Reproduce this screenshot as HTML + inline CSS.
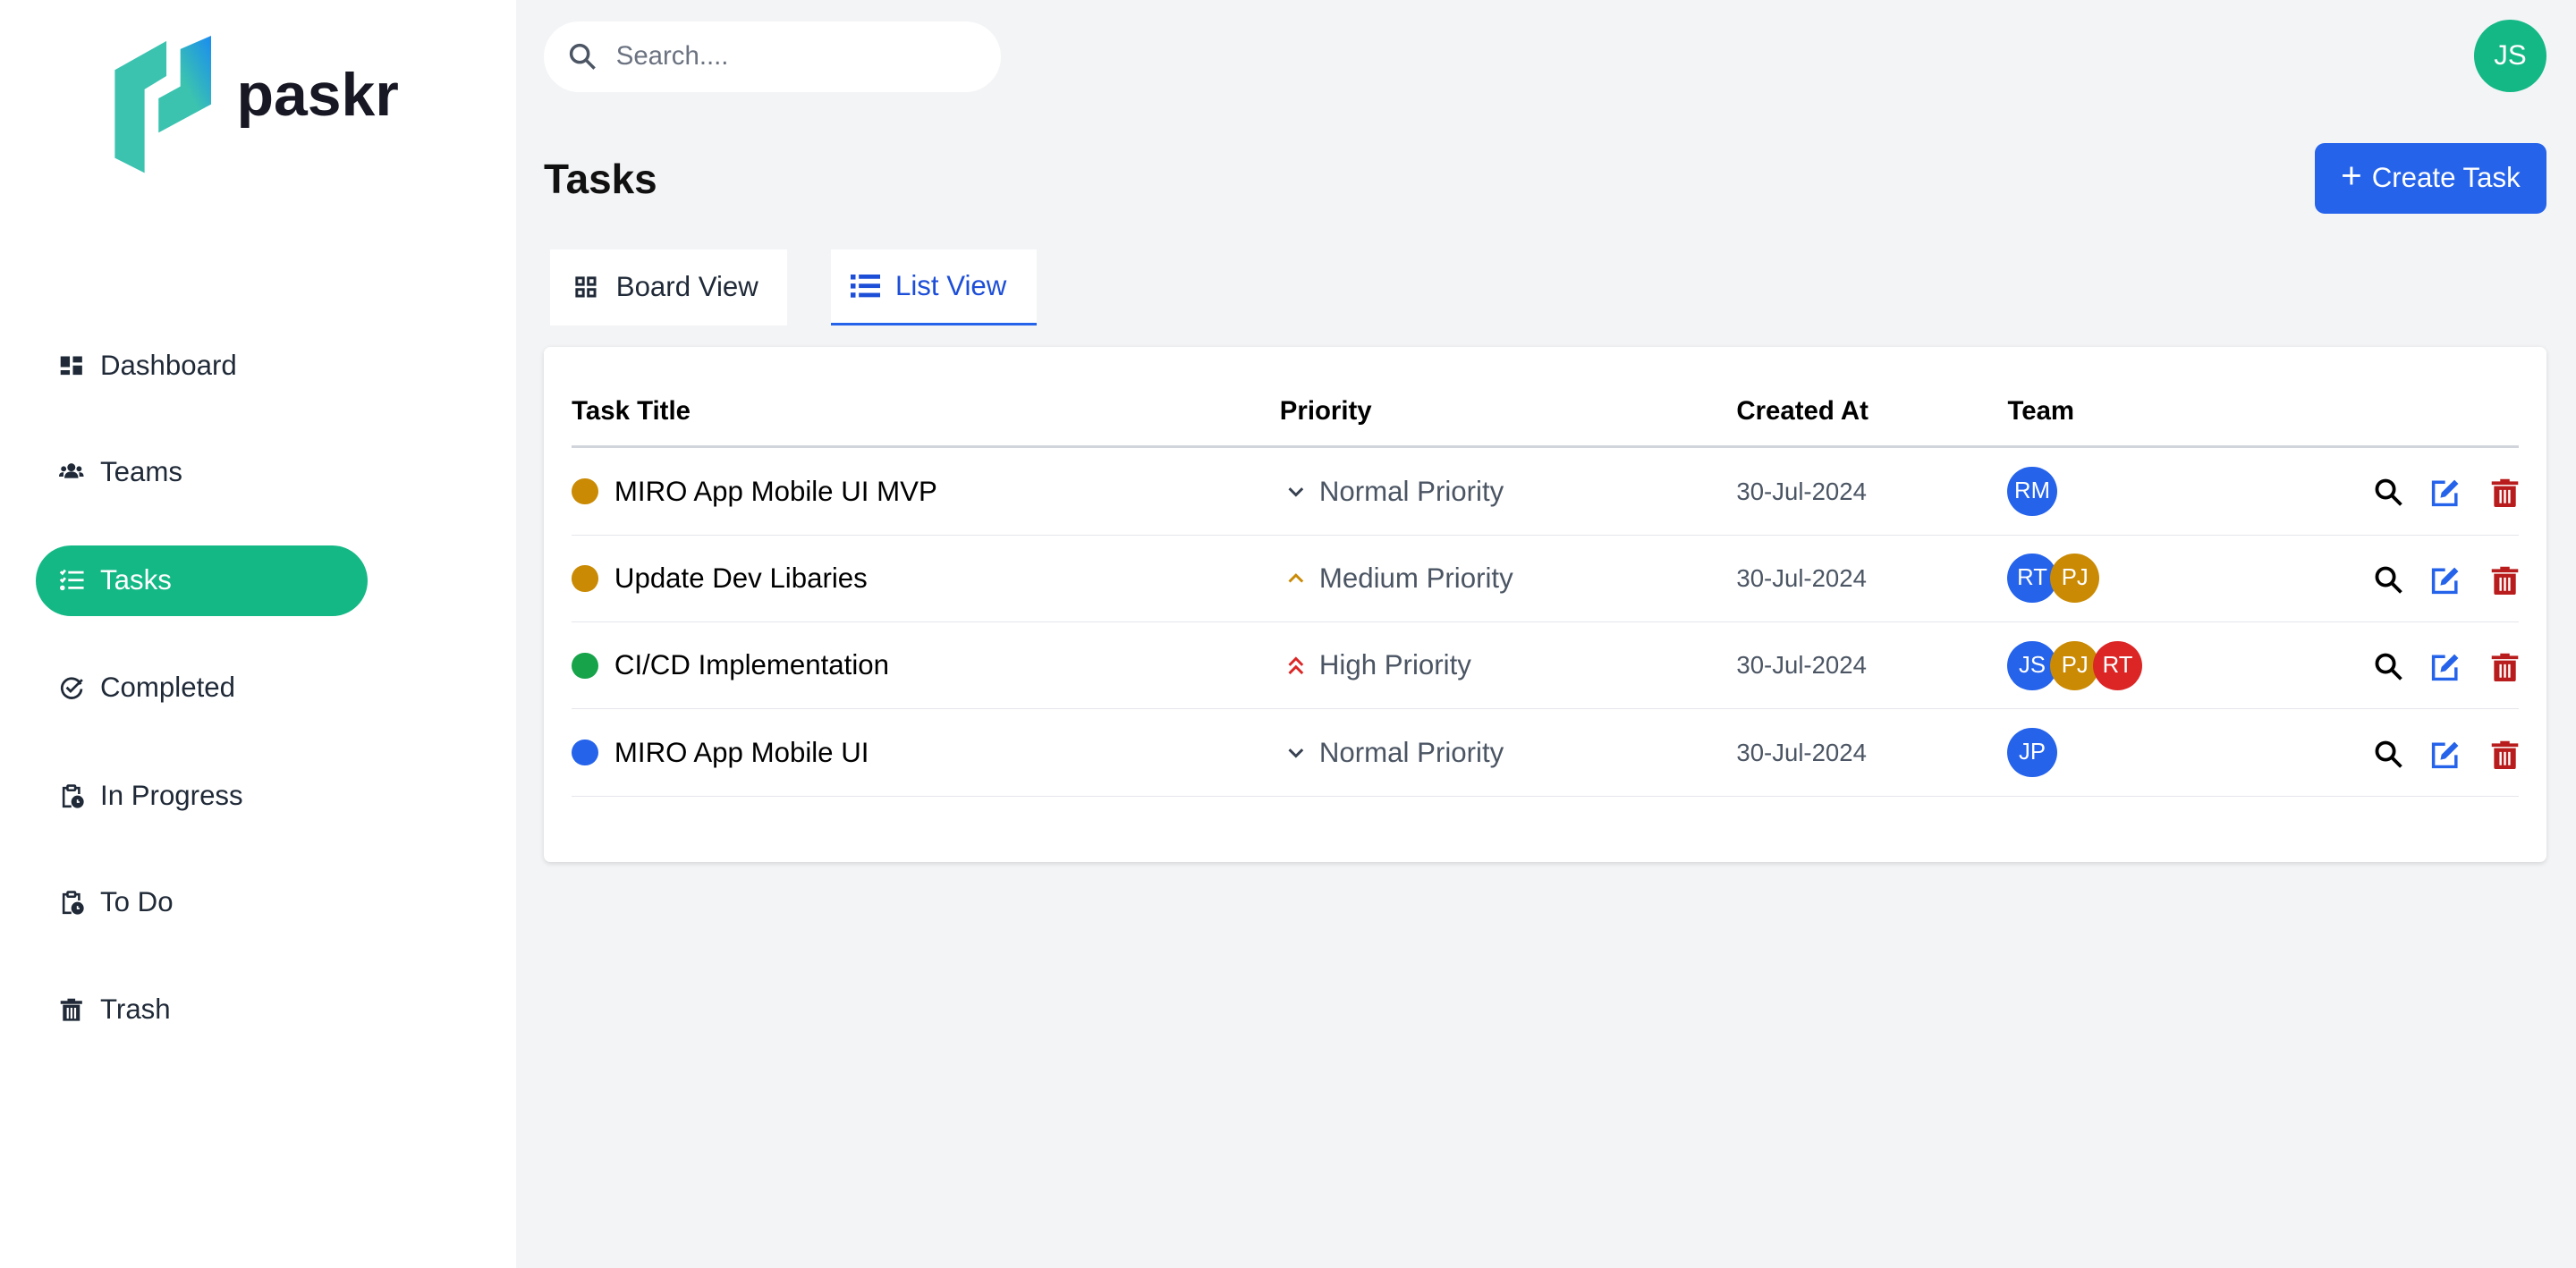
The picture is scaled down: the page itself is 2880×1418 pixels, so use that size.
<!DOCTYPE html>
<html><head><meta charset="utf-8"><style>
*{box-sizing:border-box;margin:0;padding:0}
html,body{width:2880px;height:1418px;overflow:hidden}
body{background:#f3f4f6;font-family:"Liberation Sans",sans-serif}
#w{zoom:1.836735;width:1568px;height:772px;position:relative}
.a{position:absolute}
.side{left:0;top:0;width:314px;height:772px;background:#fff}
.nav{position:absolute;left:22px;width:202px;height:43px;border-radius:22px;display:flex;align-items:center;padding-left:14px;font-size:17px;color:#1f2937}
.nav svg{width:15px;height:15px;margin-right:10px}
.nav.on{background:#14b885;color:#fff}
.row{position:absolute;left:348px;width:1185px;height:53px;border-bottom:1px solid #e5e7eb;display:flex;align-items:center}
.c1{position:absolute;left:0;display:flex;align-items:center;font-size:17px;color:#000}
.dot{width:16px;height:16px;border-radius:50%;margin-right:10px}
.c2{position:absolute;left:434px;display:flex;align-items:center;font-size:17px;color:#4b5563}
.c2 svg{width:14px;height:14px;margin-right:7px}
.c3{position:absolute;left:709px;font-size:15px;color:#4b5563}
.c4{position:absolute;left:874px;display:flex}
.av{width:30px;height:30px;border-radius:50%;color:#fff;font-size:14px;display:flex;align-items:center;justify-content:center;margin-right:-4px}
.ic{position:absolute;top:18px;width:18px;height:18px}
.b{background:#2563eb}.y{background:#ca8a04}.r{background:#dc2626}.g{background:#16a34a}
</style></head><body><div id="w">
<div class="a side">
 <svg class="a" style="left:0;top:0" width="140" height="110" viewBox="0 0 140 110"><defs><linearGradient id="lg" x1="0" y1="1" x2="1" y2="0"><stop offset=".5" stop-color="#3bc3b0"/><stop offset="1" stop-color="#1a8cf0"/></linearGradient></defs>
 <path d="M69.9 42.6 L101.3 25 L101.3 46.3 L88 54.4 L88 105.3 L69.9 96.2Z" fill="#3bc3b0"/>
 <path d="M109.8 29.9 L128.5 21.8 L128.5 63.5 L96.5 80.8 L96.5 59.9 L109.8 52.6Z" fill="url(#lg)"/></svg>
 <div class="a" style="left:144px;top:40px;font-size:37px;line-height:1;font-weight:bold;color:#181825">paskr</div>
 <div class="nav" style="top:201px"><svg viewBox="0 0 16 16"><path d="M1 2h6v7H1zM9 2h6v4H9zM9 8h6v6H9zM1 11h6v3H1z" fill="#1f2937"/></svg>Dashboard</div>
 <div class="nav" style="top:266px"><svg viewBox="0 0 16 16" fill="#1f2937"><circle cx="8" cy="5" r="2.6"/><circle cx="3" cy="6" r="1.7"/><circle cx="13" cy="6" r="1.7"/><path d="M3.5 12c0-3 2-4.2 4.5-4.2s4.5 1.2 4.5 4.2z"/><path d="M0 11c0-2 1-2.8 3-2.8L2.8 11zM16 11c0-2-1-2.8-3-2.8l.2 2.8z"/></svg>Teams</div>
 <div class="nav on" style="top:332px"><svg viewBox="0 0 16 16" fill="none" stroke="#fff" stroke-width="1.6"><path d="M1 2.5l1.2 1.2L4 1.5M1 7.5l1.2 1.2L4 6.5M6 3h10M6 8h10M6 13h10"/><circle cx="2.2" cy="13" r=".8" fill="#fff"/></svg>Tasks</div>
 <div class="nav" style="top:397px"><svg viewBox="0 0 16 16" fill="none" stroke="#1f2937" stroke-width="1.6"><path d="M14 6A6.3 6.3 0 1 0 14.5 9"/><path d="M5 8l2.5 2.5L15 3"/></svg>Completed</div>
 <div class="nav" style="top:463px"><svg viewBox="0 0 16 16" fill="none" stroke="#1f2937" stroke-width="1.5"><path d="M5 3H3v12h5M11 3h2v4"/><rect x="5.5" y="1.5" width="5" height="3" rx=".5"/><circle cx="12" cy="12" r="3.3" fill="#1f2937"/><path d="M12 10.5v1.7h1.3" stroke="#fff" stroke-width="1"/></svg>In Progress</div>
 <div class="nav" style="top:528px"><svg viewBox="0 0 16 16" fill="none" stroke="#1f2937" stroke-width="1.5"><path d="M5 3H3v12h5M11 3h2v4"/><rect x="5.5" y="1.5" width="5" height="3" rx=".5"/><circle cx="12" cy="12" r="3.3" fill="#1f2937"/><path d="M12 10.5v1.7h1.3" stroke="#fff" stroke-width="1"/></svg>To Do</div>
 <div class="nav" style="top:593px"><svg viewBox="0 0 16 16" fill="#1f2937"><path d="M1 2.5h14v2H1zM5.5 1h5v1.5h-5z"/><path d="M2.5 5h11v10.5h-11zM5 7v7h1.3V7zM7.4 7v7h1.3V7zM9.8 7v7h1.3V7z" fill-rule="evenodd"/></svg>Trash</div>
</div>
<div class="a" style="left:331px;top:13px;width:278px;height:43px;border-radius:22px;background:#fff;display:flex;align-items:center;padding-left:15px;font-size:16px;color:#6b7280"><svg width="17" height="17" viewBox="0 0 18 18" fill="none" stroke="#4b5563" stroke-width="2" style="margin-right:12px"><circle cx="7" cy="7" r="5.5"/><path d="M11 11l5.5 5.5"/></svg>Search....</div>
<div class="a" style="left:1506px;top:12px;width:44px;height:44px;border-radius:50%;background:#14b885;color:#fff;font-size:17px;display:flex;align-items:center;justify-content:center">JS</div>
<div class="a" style="left:331px;top:94px;font-size:25px;color:#111;font-weight:bold">Tasks</div>
<div class="a" style="left:1409px;top:87px;width:141px;height:43px;border-radius:6px;background:#2563eb;color:#fff;font-size:17px;display:flex;align-items:center;justify-content:center"><span style="font-size:22px;margin-right:6px;margin-top:-3px">+</span>Create Task</div>
<div class="a" style="left:335px;top:152px;width:144px;height:46px;background:#fff;display:flex;align-items:center;padding-left:15px;font-size:17px;color:#1f2937"><svg width="13" height="13" viewBox="0 0 13 13" fill="none" stroke="#1f2937" stroke-width="1.6" style="margin-right:12px"><rect x="1" y="1" width="4" height="4"/><rect x="8" y="1" width="4" height="4"/><rect x="1" y="8" width="4" height="4"/><rect x="8" y="8" width="4" height="4"/></svg>Board View</div>
<div class="a" style="left:506px;top:152px;width:125px;height:46px;background:#fff;border-bottom:2px solid #2563eb;display:flex;align-items:center;padding-left:12px;font-size:17px;color:#1d4ed8"><svg width="18" height="14" viewBox="0 0 18 14" fill="#1d4ed8" style="margin-right:9px"><rect x="0" y="0" width="3" height="3"/><rect x="0" y="5.5" width="3" height="3"/><rect x="0" y="11" width="3" height="3"/><rect x="5" y="0" width="13" height="2.6"/><rect x="5" y="5.6" width="13" height="2.6"/><rect x="5" y="11.2" width="13" height="2.6"/></svg>List View</div>
<div class="a" style="left:331px;top:211px;width:1219px;height:314px;background:#fff;border-radius:4px;box-shadow:0 1px 3px rgba(0,0,0,.12)"></div>
<div class="a" style="left:348px;top:226px;width:1185px;height:47px;border-bottom:2px solid #d1d5db;font-size:16px;font-weight:bold;color:#000">
 <span class="a" style="left:0;top:15px">Task Title</span><span class="a" style="left:431px;top:15px">Priority</span><span class="a" style="left:709px;top:15px">Created At</span><span class="a" style="left:874px;top:15px">Team</span></div>
<div class="row" style="top:273px">
 <div class="c1"><div class="dot y"></div>MIRO App Mobile UI MVP</div>
 <div class="c2"><svg viewBox="0 0 14 14" fill="none" stroke="#374151" stroke-width="1.6"><path d="M3 5l4 4 4-4"/></svg>Normal Priority</div>
 <div class="c3">30-Jul-2024</div>
 <div class="c4"><div class="av b">RM</div></div>
 <svg class="ic" style="left:1097px" viewBox="0 0 19 19" fill="none" stroke="#000" stroke-width="2.2"><circle cx="7.5" cy="7.5" r="5.5"/><path d="M11.5 11.5l6 6"/></svg>
 <svg class="ic" style="left:1132px" viewBox="0 0 19 19"><path d="M9 3H1.5v14.5H16V10" fill="none" stroke="#2563eb" stroke-width="2"/><path d="M6 13l.7-3.3L15 1.5l2.5 2.5-8.3 8.3z" fill="#2563eb"/></svg>
 <svg class="ic" style="left:1168px" viewBox="0 0 19 19" fill="#b91c1c"><path d="M1 2.5h17v2.2H1zM6.5 1h6v1.6h-6z"/><path d="M2.5 5.5h14v12.5a1 1 0 0 1-1 1h-12a1 1 0 0 1-1-1zM6 8v8.5h1.4V8zM8.8 8v8.5h1.4V8zM11.6 8v8.5H13V8z" fill-rule="evenodd"/></svg>
</div>
<div class="row" style="top:326px">
 <div class="c1"><div class="dot y"></div>Update Dev Libaries</div>
 <div class="c2"><svg viewBox="0 0 14 14" fill="none" stroke="#ca8a04" stroke-width="1.6"><path d="M3 9l4-4 4 4"/></svg>Medium Priority</div>
 <div class="c3">30-Jul-2024</div>
 <div class="c4"><div class="av b">RT</div><div class="av y">PJ</div></div>
 <svg class="ic" style="left:1097px" viewBox="0 0 19 19" fill="none" stroke="#000" stroke-width="2.2"><circle cx="7.5" cy="7.5" r="5.5"/><path d="M11.5 11.5l6 6"/></svg>
 <svg class="ic" style="left:1132px" viewBox="0 0 19 19"><path d="M9 3H1.5v14.5H16V10" fill="none" stroke="#2563eb" stroke-width="2"/><path d="M6 13l.7-3.3L15 1.5l2.5 2.5-8.3 8.3z" fill="#2563eb"/></svg>
 <svg class="ic" style="left:1168px" viewBox="0 0 19 19" fill="#b91c1c"><path d="M1 2.5h17v2.2H1zM6.5 1h6v1.6h-6z"/><path d="M2.5 5.5h14v12.5a1 1 0 0 1-1 1h-12a1 1 0 0 1-1-1zM6 8v8.5h1.4V8zM8.8 8v8.5h1.4V8zM11.6 8v8.5H13V8z" fill-rule="evenodd"/></svg>
</div>
<div class="row" style="top:379px">
 <div class="c1"><div class="dot g"></div>CI/CD Implementation</div>
 <div class="c2"><svg viewBox="0 0 14 14" fill="none" stroke="#dc2626" stroke-width="1.6"><path d="M3 7l4-4 4 4M3 12l4-4 4 4"/></svg>High Priority</div>
 <div class="c3">30-Jul-2024</div>
 <div class="c4"><div class="av b">JS</div><div class="av y">PJ</div><div class="av r">RT</div></div>
 <svg class="ic" style="left:1097px" viewBox="0 0 19 19" fill="none" stroke="#000" stroke-width="2.2"><circle cx="7.5" cy="7.5" r="5.5"/><path d="M11.5 11.5l6 6"/></svg>
 <svg class="ic" style="left:1132px" viewBox="0 0 19 19"><path d="M9 3H1.5v14.5H16V10" fill="none" stroke="#2563eb" stroke-width="2"/><path d="M6 13l.7-3.3L15 1.5l2.5 2.5-8.3 8.3z" fill="#2563eb"/></svg>
 <svg class="ic" style="left:1168px" viewBox="0 0 19 19" fill="#b91c1c"><path d="M1 2.5h17v2.2H1zM6.5 1h6v1.6h-6z"/><path d="M2.5 5.5h14v12.5a1 1 0 0 1-1 1h-12a1 1 0 0 1-1-1zM6 8v8.5h1.4V8zM8.8 8v8.5h1.4V8zM11.6 8v8.5H13V8z" fill-rule="evenodd"/></svg>
</div>
<div class="row" style="top:432px">
 <div class="c1"><div class="dot b"></div>MIRO App Mobile UI</div>
 <div class="c2"><svg viewBox="0 0 14 14" fill="none" stroke="#374151" stroke-width="1.6"><path d="M3 5l4 4 4-4"/></svg>Normal Priority</div>
 <div class="c3">30-Jul-2024</div>
 <div class="c4"><div class="av b">JP</div></div>
 <svg class="ic" style="left:1097px" viewBox="0 0 19 19" fill="none" stroke="#000" stroke-width="2.2"><circle cx="7.5" cy="7.5" r="5.5"/><path d="M11.5 11.5l6 6"/></svg>
 <svg class="ic" style="left:1132px" viewBox="0 0 19 19"><path d="M9 3H1.5v14.5H16V10" fill="none" stroke="#2563eb" stroke-width="2"/><path d="M6 13l.7-3.3L15 1.5l2.5 2.5-8.3 8.3z" fill="#2563eb"/></svg>
 <svg class="ic" style="left:1168px" viewBox="0 0 19 19" fill="#b91c1c"><path d="M1 2.5h17v2.2H1zM6.5 1h6v1.6h-6z"/><path d="M2.5 5.5h14v12.5a1 1 0 0 1-1 1h-12a1 1 0 0 1-1-1zM6 8v8.5h1.4V8zM8.8 8v8.5h1.4V8zM11.6 8v8.5H13V8z" fill-rule="evenodd"/></svg>
</div>
</div></body></html>
